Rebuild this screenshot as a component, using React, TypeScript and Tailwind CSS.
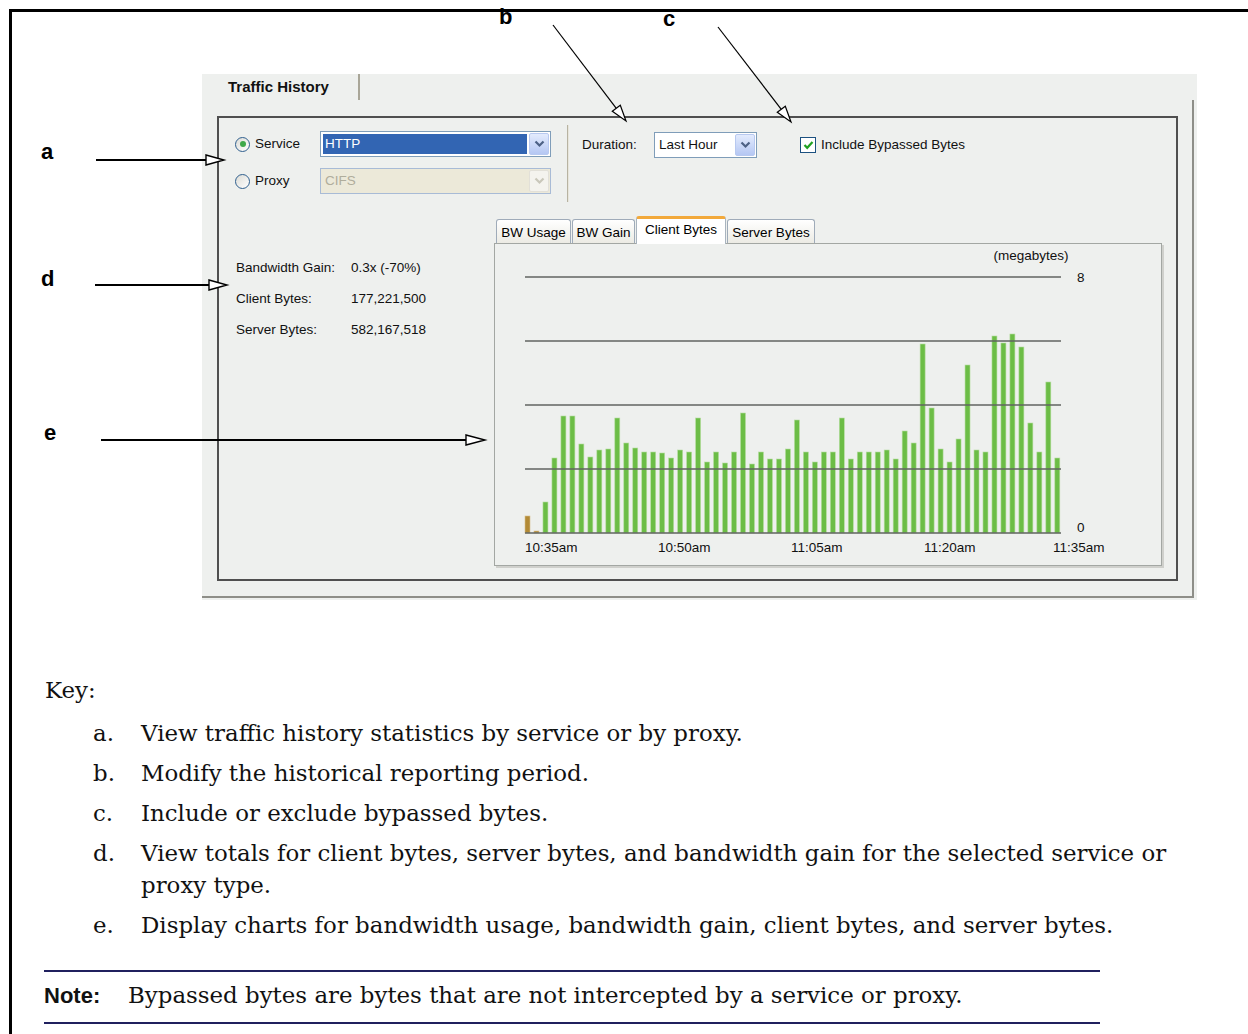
import React from "react";

const bars = [17,2,31,75,117,117,89,76,83,84,115,90,85,81,81,80,75,83,81,115,71,81,70,81,120,69,81,74,74,84,113,81,71,81,81,115,74,81,81,81,83,74,102,90,189,125,84,71,94,168,83,81,197,190,199,186,110,81,151,75];

const ui = { fontFamily: '"Liberation Sans", Arial, sans-serif' };
const serif = { fontFamily: '"DejaVu Serif", "Liberation Serif", serif' };

function Chevron({ color }: { color: string }) {
  return (
    <svg width="11" height="8" viewBox="0 0 11 8">
      <path d="M1.5 1.5 L5.5 5.5 L9.5 1.5" fill="none" stroke={color} strokeWidth="2.2" />
    </svg>
  );
}

function DropBtn({ disabled }: { disabled?: boolean }) {
  return (
    <div
      className={
        disabled
          ? "w-[20px] h-[22px] rounded-[2px] border border-[#e2e0d8] bg-[#f4f3ee] flex items-center justify-center"
          : "w-[20px] h-[22px] rounded-[2px] border border-[#b8c9f0] bg-gradient-to-b from-[#e3ebfd] to-[#b5c7f3] flex items-center justify-center"
      }
    >
      <Chevron color={disabled ? "#c9c7ba" : "#4d6185"} />
    </div>
  );
}

function Radio({ checked }: { checked?: boolean }) {
  return (
    <div className="w-[15px] h-[15px] rounded-full border border-[#2f5f8e] bg-gradient-to-br from-[#dcdcd6] to-white flex items-center justify-center">
      {checked && <div className="w-[6px] h-[6px] rounded-full bg-[#3ea84a]" />}
    </div>
  );
}

function Checkbox() {
  return (
    <div className="w-[16px] h-[16px] border border-[#1c5180] bg-white flex items-center justify-center">
      <svg width="11" height="10" viewBox="0 0 11 10">
        <path d="M1.5 5 L4.2 7.8 L9.5 2" fill="none" stroke="#21a121" strokeWidth="2.2" />
      </svg>
    </div>
  );
}

function ChartTab({ label, w, active }: { label: string; w: string; active?: boolean }) {
  if (active) {
    return (
      <div
        className={`${w} h-[28px] -mb-[1px] relative z-10 bg-white border-t-[3px] border-t-[#f2a93b] border-x border-x-[#a9b4bf] rounded-t-[3px] text-black text-center leading-[22px]`}
      >
        {label}
      </div>
    );
  }
  return (
    <div
      className={`${w} h-[24px] border border-b-0 border-[#9fabb9] rounded-t-[3px] bg-gradient-to-b from-white to-[#ecebe4] text-black text-center leading-[25px]`}
    >
      {label}
    </div>
  );
}

function Chart() {
  const base = 289;
  const gridY = [33, 97, 161, 225, 289];
  const times = [
    { t: "10:35am", x: 30 },
    { t: "10:50am", x: 163 },
    { t: "11:05am", x: 296 },
    { t: "11:20am", x: 429 },
    { t: "11:35am", x: 558 },
  ];
  return (
    <svg width="666" height="321" viewBox="0 0 666 321" style={ui}>
      {bars.map((h, i) => (
        <rect
          key={i}
          x={30 + i * 8.98}
          y={base - h}
          width={5}
          height={h}
          fill={i < 2 ? "#b28a36" : "#6cbd46"}
          stroke={i < 2 ? "#d8c08e" : "#b6dea0"}
          strokeWidth={0.6}
        />
      ))}
      {gridY.map((y) => (
        <line key={y} x1={30} x2={566} y1={y} y2={y} stroke="#606460" strokeWidth={1.6} />
      ))}
      <text x={536} y={16} fontSize={13.5} textAnchor="middle" fill="#111">(megabytes)</text>
      <text x={582} y={38} fontSize={13.5} fill="#111">8</text>
      <text x={582} y={288} fontSize={13.5} fill="#111">0</text>
      {times.map((t) => (
        <text key={t.t} x={t.x} y={308} fontSize={13.5} fill="#111">{t.t}</text>
      ))}
    </svg>
  );
}

function Panel() {
  return (
    <div className="ml-[190px] mt-[62px] w-[995px] h-[526px] bg-[#eef0ee] text-[13.5px] text-[#111]" style={ui}>
      <div className="h-[26px] flex">
        <div className="w-[158px] h-[26px] border-r-2 border-[#a9a698] pl-[26px] font-bold text-[15px] leading-[26px] text-[#111]">
          Traffic History
        </div>
      </div>
      <div className="w-[992px] h-[498px] border-r-2 border-b-2 border-[#8e8e88] pl-[15px] pt-[16px]">
        <div className="w-[961px] h-[465px] border-2 border-[#4f4f4f]">
          {/* top row */}
          <div className="ml-[16px] mt-[7px] flex items-start">
            <div className="pt-[6px] flex flex-col gap-[11px]">
              <div className="flex items-center h-[26px]">
                <div className="w-[85px] flex items-center gap-[5px]">
                  <Radio checked />
                  <span>Service</span>
                </div>
                <div className="w-[231px] h-[26px] border border-[#7f9db9] bg-white flex items-center pl-[2px] pr-[1px]">
                  <div className="flex-1 h-[20px] bg-[#3265b3] text-white leading-[20px] pl-[2px] mr-[2px]">HTTP</div>
                  <DropBtn />
                </div>
              </div>
              <div className="flex items-center h-[26px]">
                <div className="w-[85px] flex items-center gap-[5px]">
                  <Radio />
                  <span>Proxy</span>
                </div>
                <div className="w-[231px] h-[26px] border border-[#a8bbd6] bg-[#ece9d9] flex items-center pl-[4px] pr-[1px]">
                  <div className="flex-1 text-[#b0ad9c]">CIFS</div>
                  <DropBtn disabled />
                </div>
              </div>
            </div>
            <div className="ml-[16px] w-[2px] h-[77px] bg-[#b7b3a2] border-r border-[#e8e6dc]" />
            <div className="ml-[13px] mt-[7px] flex items-center h-[26px]">
              <span className="w-[72px]">Duration:</span>
              <div className="w-[103px] h-[26px] border border-[#7f9db9] bg-white flex items-center pl-[4px] pr-[1px]">
                <div className="flex-1">Last Hour</div>
                <DropBtn />
              </div>
              <div className="ml-[43px] flex items-center gap-[5px]">
                <Checkbox />
                <span>Include Bypassed Bytes</span>
              </div>
            </div>
          </div>
          {/* bottom row */}
          <div className="mt-[14px] flex">
            <div className="w-[275px] pl-[17px] pt-[37px]">
              {[
                ["Bandwidth Gain:", "0.3x (-70%)"],
                ["Client Bytes:", "177,221,500"],
                ["Server Bytes:", "582,167,518"],
              ].map(([k, v]) => (
                <div key={k} className="flex h-[31px] items-center">
                  <span className="w-[115px]">{k}</span>
                  <span>{v}</span>
                </div>
              ))}
            </div>
            <div className="flex flex-col">
              <div className="h-[27px] flex items-end pl-[2px] gap-[1px]">
                <ChartTab label="BW Usage" w="w-[75px]" />
                <ChartTab label="BW Gain" w="w-[63px]" />
                <ChartTab label="Client Bytes" w="w-[90px]" active />
                <ChartTab label="Server Bytes" w="w-[88px]" />
              </div>
              <div className="w-[668px] h-[323px] border border-[#a3a7a3] shadow-[2px_2px_0_#cfd0cc] bg-[#eef0ee]">
                <Chart />
              </div>
            </div>
          </div>
        </div>
      </div>
    </div>
  );
}

function Key() {
  const items: [string, React.ReactNode][] = [
    ["a.", "View traffic history statistics by service or by proxy."],
    ["b.", "Modify the historical reporting period."],
    ["c.", "Include or exclude bypassed bytes."],
  ];
  return (
    <div className="ml-[33px] text-[22.9px] text-[#111]" style={serif}>
      <div className="mt-[70px] h-[40px] leading-[40px]">Key:</div>
      <div className="mt-[3px] pl-[48px]">
        {items.map(([l, t]) => (
          <div key={l} className="flex leading-[40px]">
            <span className="w-[48px] shrink-0">{l}</span>
            <span>{t}</span>
          </div>
        ))}
        <div className="flex leading-[32px] py-[4px]">
          <span className="w-[48px] shrink-0">d.</span>
          <span className="whitespace-nowrap">
            View totals for client bytes, server bytes, and bandwidth gain for the selected service or
            <br />
            proxy type.
          </span>
        </div>
        <div className="flex leading-[40px]">
          <span className="w-[48px] shrink-0">e.</span>
          <span className="whitespace-nowrap">Display charts for bandwidth usage, bandwidth gain, client bytes, and server bytes.</span>
        </div>
      </div>
      <div className="mt-[25px] -ml-[1px] w-[1056px] border-t-2 border-b-2 border-[#20205e] h-[54px] flex items-center pb-[4px]">
        <span className="w-[84px] font-bold text-[22px]" style={ui}>Note:</span>
        <span className="whitespace-nowrap">Bypassed bytes are bytes that are not intercepted by a service or proxy.</span>
      </div>
    </div>
  );
}

function Arrows() {
  return (
    <svg className="absolute left-0 top-0 pointer-events-none" width="1248" height="1034" viewBox="0 0 1248 1034">
      <g stroke="#000" fill="#fff">
        <line x1={96} y1={160} x2={207} y2={160} strokeWidth={2} />
        <polygon points="206,155 224,160 206,165" strokeWidth={1.4} />
        <line x1={95} y1={285} x2={210} y2={285} strokeWidth={2} />
        <polygon points="209,280 227,285 209,290" strokeWidth={1.4} />
        <line x1={101} y1={440} x2={467} y2={440} strokeWidth={2} />
        <polygon points="466,435 485,440 466,445" strokeWidth={1.4} />
        <line x1={553} y1={25} x2={616.3} y2={108.3} strokeWidth={1.2} />
        <polygon points="612.3,111.3 626,121 620.3,105.3" strokeWidth={1.2} />
        <line x1={718} y1={27} x2={781.3} y2={109.3} strokeWidth={1.2} />
        <polygon points="777.3,112.3 791,122 785.3,106.3" strokeWidth={1.2} />
      </g>
    </svg>
  );
}

export default function App() {
  const lbl = "absolute font-bold text-[22px] leading-[22px] text-black";
  return (
    <div className="relative isolate z-0 w-[1248px] h-[1034px] bg-white overflow-hidden">
      <span className={`${lbl} -z-10 left-[499px] top-[6px]`} style={ui}>b</span>
      <div className="ml-[9px] mt-[9px] h-[1025px] border-t-[3px] border-l-[3px] border-black">
        <Panel />
        <Key />
      </div>
      <span className={`${lbl} left-[41px] top-[141px]`} style={ui}>a</span>
      <span className={`${lbl} left-[663px] top-[8px]`} style={ui}>c</span>
      <span className={`${lbl} left-[41px] top-[268px]`} style={ui}>d</span>
      <span className={`${lbl} left-[44px] top-[422px]`} style={ui}>e</span>
      <Arrows />
    </div>
  );
}
